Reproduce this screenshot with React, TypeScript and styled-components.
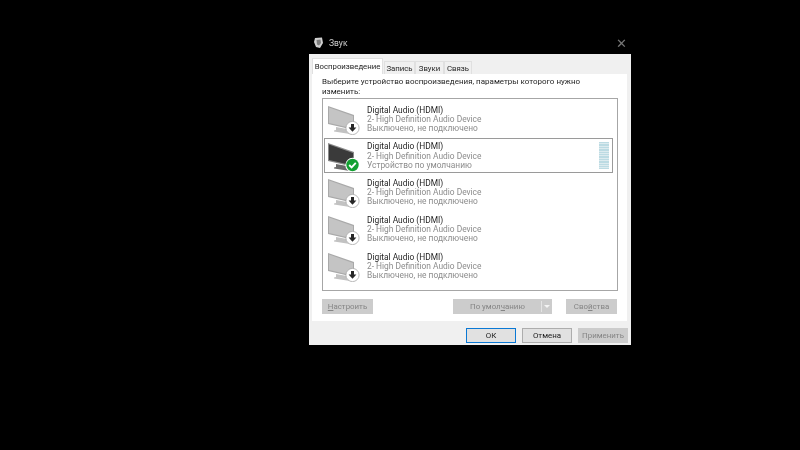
import React from 'react';
import styled, { createGlobalStyle } from 'styled-components';

const GlobalStyle = createGlobalStyle`
  html, body {
    margin: 0;
    padding: 0;
    background-color: #000000;
  }
`;

const Page = styled.div`
  width: 800px;
  height: 450px;
  overflow: hidden;
  background-color: #000000;
  padding: 32px 0 0 309px;
  box-sizing: border-box;
  font-family: Roboto, 'Noto Sans', sans-serif;
`;

const Dialog = styled.div`
  width: 322px;
  filter: blur(0.4px);
`;

const TitleBar = styled.div`
  height: 22px;
  display: flex;
  align-items: center;
  gap: 5px;
  padding: 0 4px;
  color: #d0d0d0;
  font-size: 8.5px;
`;

const CloseButton = styled.div`
  margin-left: auto;
  color: #777777;
  font-size: 13px;
  line-height: 13px;
`;

const Body = styled.div`
  height: 291px;
  box-sizing: border-box;
  background-color: #f0f0f0;
  padding: 4px 3px 0 3px;
`;

const TabRow = styled.div`
  display: flex;
  align-items: flex-end;
  height: 16px;
`;

const Tab = styled.div<{ $active?: boolean; $w: number }>`
  width: ${(p) => p.$w}px;
  height: ${(p) => (p.$active ? 16 : 13)}px;
  box-sizing: border-box;
  display: flex;
  align-items: center;
  justify-content: center;
  font-size: 7.8px;
  color: #1f1f1f;
  background-color: ${(p) => (p.$active ? '#ffffff' : '#f0f0f0')};
  border: 1px solid #e0e0e0;
  border-bottom: none;
  margin-right: ${(p) => (p.$active ? 1 : 0)}px;
`;

const Panel = styled.div`
  width: 315px;
  height: 247px;
  box-sizing: border-box;
  background-color: #ffffff;
  padding: 3px 10px 0 10px;
`;

const Hint = styled.div`
  font-size: 8px;
  line-height: 10px;
  color: #1f1f1f;
  height: 21px;
`;

const DeviceList = styled.div`
  width: 296px;
  height: 193px;
  box-sizing: border-box;
  border: 1px solid #a6a6a6;
  padding: 2.5px 4px 0 1px;
  display: flex;
  flex-direction: column;
  gap: 2px;
`;

const DeviceRow = styled.div<{ $selected?: boolean }>`
  height: 34.75px;
  box-sizing: border-box;
  display: flex;
  align-items: center;
  padding-left: 2px;
  border: 1px solid ${(p) => (p.$selected ? '#9a9a9a' : 'transparent')};
`;

const DeviceText = styled.div`
  margin: 1px 0 0 7px;
  display: flex;
  flex-direction: column;
`;

const DeviceLine = styled.div<{ $muted?: boolean }>`
  font-size: 8.4px;
  line-height: 9.2px;
  white-space: nowrap;
  color: ${(p) => (p.$muted ? '#8c8c8c' : '#1f1f1f')};
`;

const LevelMeter = styled.div`
  margin-left: auto;
  margin-right: 3px;
  width: 10px;
  height: 27px;
  background: repeating-linear-gradient(
    to bottom,
    #bcdbe3 0,
    #bcdbe3 1.4px,
    #dcebef 1.4px,
    #dcebef 2.4px
  );
`;

const ActionRow = styled.div`
  display: flex;
  align-items: center;
  margin-top: 8px;
`;

const GreyButton = styled.div<{ $w: number; $disabled?: boolean }>`
  width: ${(p) => p.$w}px;
  height: 15px;
  box-sizing: border-box;
  display: flex;
  align-items: center;
  justify-content: center;
  font-size: 7.9px;
  color: ${(p) => (p.$disabled ? '#858585' : '#1a1a1a')};
  background-color: ${(p) => (p.$disabled ? '#cccccc' : '#e1e1e1')};
  border: 1px solid ${(p) => (p.$disabled ? '#cccccc' : '#adadad')};
`;

const SplitButton = styled(GreyButton)`
  margin-left: 80px;
  justify-content: flex-start;
  padding-left: 16px;
`;

const SplitCaret = styled.div`
  margin-left: auto;
  width: 9px;
  height: 11px;
  border-left: 1px solid #e4e4e4;
  display: flex;
  align-items: center;
  justify-content: center;
  &::after {
    content: '';
    border-left: 3px solid transparent;
    border-right: 3px solid transparent;
    border-top: 3px solid #f4f4f4;
  }
`;

const PropsButton = styled(GreyButton)`
  margin-left: 14px;
`;

const Footer = styled.div`
  display: flex;
  justify-content: flex-end;
  gap: 6px;
  margin-top: 7px;
`;

const DefaultButton = styled(GreyButton)`
  border: 1.5px solid #0a78d4;
`;

const Accel = styled.span`
  text-decoration: underline;
  text-underline-offset: 1px;
`;

function Monitor({ on }: { on?: boolean }) {
  return (
    <svg width="33" height="32" viewBox="0 0 33 32">
      <path d="M9 24 L20 26 V29 L23 30 V31 L7 28.5 V27.5 L9 27 Z" fill={on ? '#6a6a6a' : '#c2c2c2'} />
      <path d="M1 3 L27 12 V27 L1 21 Z" fill={on ? '#8a8a8a' : '#a9a9a9'} />
      <path d="M2 4.6 L26 13 V25.6 L2 20 Z" fill={on ? '#3a3a3a' : '#c4c4c4'} />
      {on ? (
        <>
          <circle cx="25.5" cy="25" r="7.2" fill="#ffffff" />
          <circle cx="25.5" cy="25" r="6.2" fill="#13a032" />
          <path d="M22.2 25 L24.6 27.4 L28.8 22.8" fill="none" stroke="#ffffff" strokeWidth="1.8" />
        </>
      ) : (
        <>
          <circle cx="25.5" cy="25" r="6.6" fill="#ffffff" stroke="#a8a8a8" strokeWidth="0.8" />
          <path d="M24 21 H27 V24.6 H29.4 L25.5 28.8 L21.6 24.6 H24 Z" fill="#262626" />
        </>
      )}
    </svg>
  );
}

function SpeakerIcon() {
  return (
    <svg width="11" height="12" viewBox="0 0 11 12">
      <path d="M2 1 L9 0.5 L10 6 L7 11 L3 10 L1 5 Z" fill="#d0d0d0" />
      <path d="M3.5 3 L7.5 2.5 L8 6 L6 8.5 L4 7.5 Z" fill="#7c7c7c" />
    </svg>
  );
}

const devices = [
  { status: 'Выключено, не подключено' },
  { status: 'Устройство по умолчанию', on: true },
  { status: 'Выключено, не подключено' },
  { status: 'Выключено, не подключено' },
  { status: 'Выключено, не подключено' }
];

export default function App() {
  return (
    <Page>
      <GlobalStyle />
      <Dialog>
        <TitleBar>
          <SpeakerIcon />
          <span>Звук</span>
          <CloseButton>✕</CloseButton>
        </TitleBar>
        <Body>
          <TabRow>
            <Tab $active $w={71}>Воспроизведение</Tab>
            <Tab $w={31}>Запись</Tab>
            <Tab $w={29}>Звуки</Tab>
            <Tab $w={28}>Связь</Tab>
          </TabRow>
          <Panel>
            <Hint>Выберите устройство воспроизведения, параметры которого нужно изменить:</Hint>
            <DeviceList>
              {devices.map((d, idx) => (
                <DeviceRow key={idx} $selected={d.on}>
                  <Monitor on={d.on} />
                  <DeviceText>
                    <DeviceLine>Digital Audio (HDMI)</DeviceLine>
                    <DeviceLine $muted>2- High Definition Audio Device</DeviceLine>
                    <DeviceLine $muted>{d.status}</DeviceLine>
                  </DeviceText>
                  {d.on && <LevelMeter />}
                </DeviceRow>
              ))}
            </DeviceList>
            <ActionRow>
              <GreyButton $w={51} $disabled><Accel>Н</Accel>астроить</GreyButton>
              <SplitButton $w={99} $disabled>
                По умол<Accel>ч</Accel>анию
                <SplitCaret />
              </SplitButton>
              <PropsButton $w={51} $disabled>Сво<Accel>й</Accel>ства</PropsButton>
            </ActionRow>
          </Panel>
          <Footer>
            <DefaultButton $w={50}>ОК</DefaultButton>
            <GreyButton $w={50}>Отмена</GreyButton>
            <GreyButton $w={50} $disabled>Применить</GreyButton>
          </Footer>
        </Body>
      </Dialog>
    </Page>
  );
}
